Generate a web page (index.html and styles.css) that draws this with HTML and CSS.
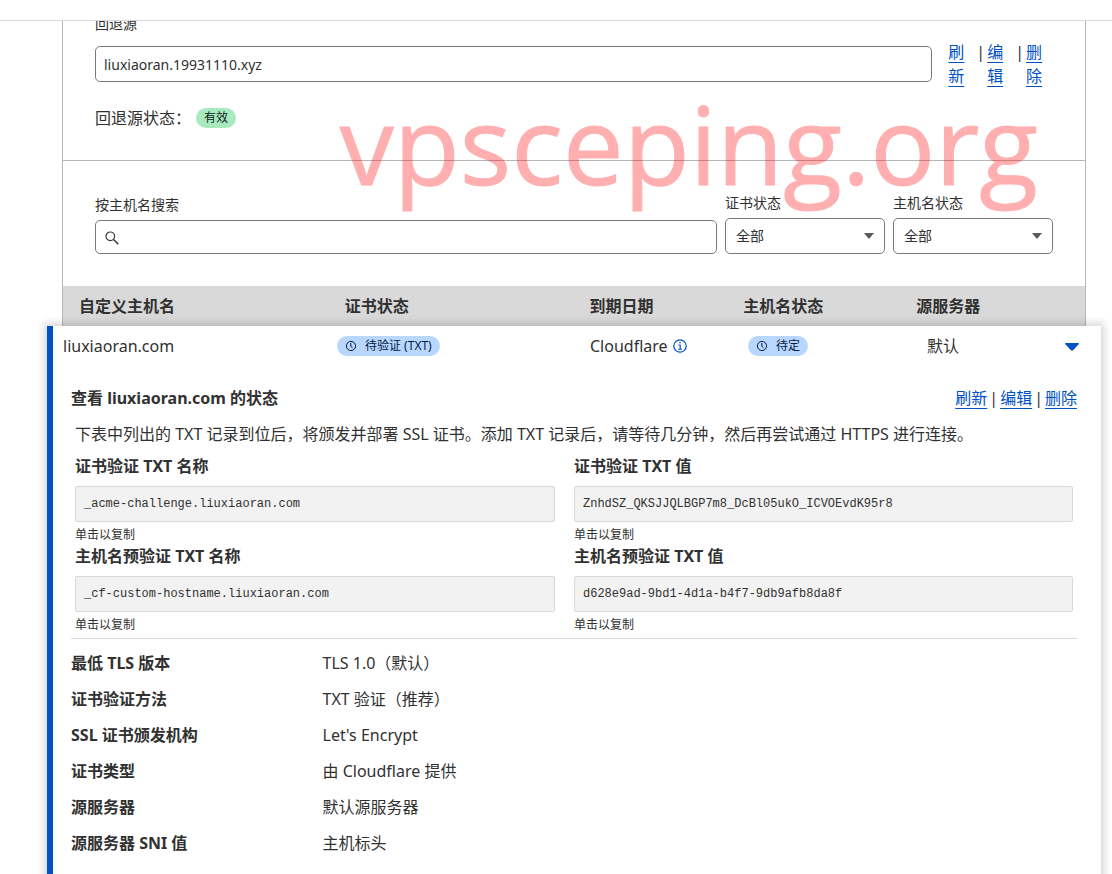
FILE: index.html
```html
<!DOCTYPE html>
<html lang="zh-CN">

<head>
    <meta charset="UTF-8">
    <meta name="viewport" content="width=device-width, initial-scale=1.0">
    <title>自定义主机名</title>
    <link rel="stylesheet" href="styles.css">
</head>

<body>
    <header class="topbar"></header>
    <main class="panel">
        <section class="fallback">
            <label class="label" for="origin">回退源</label>
            <div class="origin-row">
                <input type="text" id="origin" class="origin" value="liuxiaoran.19931110.xyz">
                <div class="links narrow">
                    <a href="#">刷新</a><span>|</span><a href="#">编辑</a><span>|</span><a href="#">删除</a>
                </div>
            </div>
            <div class="status">回退源状态：<span class="badge green">有效</span></div>
            <div class="watermark">vpsceping.org</div>
        </section>

        <form class="filters">
            <div class="field search">
                <label class="label" for="search">按主机名搜索</label>
                <div class="control">
                    <svg class="search-icon" width="14" height="14" viewBox="0 0 14 14" fill="none" stroke="#36393a">
                        <circle cx="5.3" cy="5.3" r="4.3" stroke-width="1.2" />
                        <path d="M8.5 8.5 13.3 13.1" stroke-width="1.5" />
                    </svg>
                    <input type="search" id="search">
                </div>
            </div>
            <div class="field">
                <label class="label" for="certStatus">证书状态</label>
                <div class="control arrow">
                    <select id="certStatus">
                        <option>全部</option>
                    </select>
                </div>
            </div>
            <div class="field">
                <label class="label" for="hostStatus">主机名状态</label>
                <div class="control arrow">
                    <select id="hostStatus">
                        <option>全部</option>
                    </select>
                </div>
            </div>
        </form>

        <table class="hosts">
            <thead>
                <tr>
                    <th>自定义主机名</th>
                    <th>证书状态</th>
                    <th>到期日期</th>
                    <th>主机名状态</th>
                    <th>源服务器</th>
                </tr>
            </thead>
            <tbody>
                <tr class="host">
                    <td>liuxiaoran.com</td>
                    <td>
                        <span class="badge blue">
                            <svg width="12" height="12" viewBox="0 0 12 12" fill="none" stroke="currentColor">
                                <circle cx="6" cy="6" r="4.6" />
                                <path d="M5.8 3v3.3l1.8 1.6" />
                            </svg>
                            待验证 (TXT)
                        </span>
                    </td>
                    <td>
                        Cloudflare
                        <svg class="info" width="14" height="14" viewBox="0 0 14 14" fill="none" stroke="#0051c3">
                            <circle cx="7" cy="7" r="6.2" stroke-width="1.2" />
                            <path d="M5.5 6h1.7v4.2M5.2 10.3h3.8" stroke-width="1.1" />
                            <circle cx="7" cy="3.7" r=".8" fill="#0051c3" stroke="none" />
                        </svg>
                    </td>
                    <td>
                        <span class="badge blue">
                            <svg width="12" height="12" viewBox="0 0 12 12" fill="none" stroke="currentColor">
                                <circle cx="6" cy="6" r="4.6" />
                                <path d="M5.8 3v3.3l1.8 1.6" />
                            </svg>
                            待定
                        </span>
                    </td>
                    <td class="last">
                        默认
                        <button type="button" class="toggle" aria-label="收起">
                            <svg width="14" height="8" viewBox="0 0 14 8" fill="#0051c3">
                                <path d="M.8 0h12.4c.8 0 1 .7.5 1.2L8 7.2c-.6.6-1.4.6-2 0L.3 1.2C-.2.7 0 0 .8 0z" />
                            </svg>
                        </button>
                    </td>
                </tr>
                <tr>
                    <td class="details" colspan="5">
                        <div class="title">
                            <h2>查看 liuxiaoran.com 的状态</h2>
                            <div class="links">
                                <a href="#">刷新</a><span>|</span><a href="#">编辑</a><span>|</span><a href="#">删除</a>
                            </div>
                        </div>
                        <p class="tip">下表中列出的 TXT 记录到位后，将颁发并部署 SSL 证书。添加 TXT 记录后，请等待几分钟，然后再尝试通过 HTTPS 进行连接。</p>
                        <div class="records">
                            <div class="record">
                                <h3>证书验证 TXT 名称</h3>
                                <code>_acme-challenge.liuxiaoran.com</code>
                                <small>单击以复制</small>
                            </div>
                            <div class="record">
                                <h3>证书验证 TXT 值</h3>
                                <code>ZnhdSZ_QKSJJQLBGP7m8_DcBl05ukO_ICVOEvdK95r8</code>
                                <small>单击以复制</small>
                            </div>
                            <div class="record">
                                <h3>主机名预验证 TXT 名称</h3>
                                <code>_cf-custom-hostname.liuxiaoran.com</code>
                                <small>单击以复制</small>
                            </div>
                            <div class="record">
                                <h3>主机名预验证 TXT 值</h3>
                                <code>d628e9ad-9bd1-4d1a-b4f7-9db9afb8da8f</code>
                                <small>单击以复制</small>
                            </div>
                        </div>
                        <table class="props">
                            <tr>
                                <th scope="row">最低 TLS 版本</th>
                                <td>TLS 1.0（默认）</td>
                            </tr>
                            <tr>
                                <th scope="row">证书验证方法</th>
                                <td>TXT 验证（推荐）</td>
                            </tr>
                            <tr>
                                <th scope="row">SSL 证书颁发机构</th>
                                <td>Let's Encrypt</td>
                            </tr>
                            <tr>
                                <th scope="row">证书类型</th>
                                <td>由 Cloudflare 提供</td>
                            </tr>
                            <tr>
                                <th scope="row">源服务器</th>
                                <td>默认源服务器</td>
                            </tr>
                            <tr>
                                <th scope="row">源服务器 SNI 值</th>
                                <td>主机标头</td>
                            </tr>
                        </table>
                    </td>
                </tr>
            </tbody>
        </table>
    </main>
</body>

</html>
```
FILE: styles.css
```css
* {
    margin: 0;
    padding: 0;
    box-sizing: border-box;
}

body {
    height: 100vh;
    overflow: hidden;
    font-family: "Noto Sans", "Noto Sans CJK SC", sans-serif;
    font-size: 16px;
    line-height: 24px;
    color: #313131;
    background-color: #fff;
}

input,
select,
button {
    font: inherit;
    color: inherit;
}

.topbar {
    position: relative;
    z-index: 1;
    height: 21px;
    background-color: #fff;
    border-bottom: 1px solid #d9d9d9;
}

.panel {
    margin: -40px 26px 0 62px;
    border: 1px solid #b6b6b6;
}

.label {
    display: block;
    font-size: 14px;
    line-height: 20px;
}

/* 回退源 */
.fallback {
    position: relative;
    padding: 32px 32px 30px;
    border-bottom: 1px solid #b6b6b6;
}

.origin-row {
    display: flex;
    align-items: center;
    gap: 16px;
    margin-top: 6px;
}

.origin {
    flex: 1;
    min-width: 0;
    height: 36px;
    padding: 0 8px;
    font-size: 14px;
    border: 1px solid #797979;
    border-radius: 5px;
}

.links {
    display: flex;
}

.links a {
    color: #0051c3;
    text-decoration: underline 1px;
    text-underline-offset: 4px;
}

.links span {
    margin: 0 2px;
}

.narrow {
    padding-right: 11px;
}

.narrow a {
    width: 16px;
}

.narrow span {
    margin-left: 12px;
}

.status {
    display: flex;
    align-items: center;
    margin-top: 18px;
}

.badge {
    display: inline-flex;
    align-items: center;
    gap: 8px;
    height: 20px;
    padding: 0 8px;
    font-size: 12px;
    line-height: 20px;
    border-radius: 10px;
}

.green {
    margin-left: 5px;
    color: #0f2417;
    background-color: #a8e9c0;
}

.blue {
    color: #001c43;
    background-color: #b9d6ff;
}

.watermark {
    position: absolute;
    top: 122px;
    right: 47px;
    font-family: "Open Sans", sans-serif;
    font-size: 108px;
    line-height: 80px;
    color: #f00;
    -webkit-text-stroke: 1px #f00;
    opacity: .31;
    pointer-events: none;
}

/* 筛选 */
.filters {
    display: flex;
    align-items: flex-end;
    gap: 8px;
    padding: 32px;
}

.field {
    width: 160px;
}

.search {
    flex: 1;
}

.control {
    position: relative;
    margin-top: 5px;
}

.control input,
.control select {
    display: block;
    width: 100%;
    height: 36px;
    padding: 0 10px;
    font-size: 14px;
    background-color: #fff;
    border: 1px solid #797979;
    border-radius: 5px;
    appearance: none;
}

.control input {
    height: 34px;
    padding-left: 32px;
}

.search-icon {
    position: absolute;
    top: 11px;
    left: 10px;
}

.arrow::after {
    content: "";
    position: absolute;
    top: 15px;
    right: 11px;
    border: 5px solid transparent;
    border-top: 6px solid #595959;
    border-bottom: none;
    pointer-events: none;
}

/* 主机名列表 */
.hosts,
.hosts > thead,
.hosts > tbody {
    display: block;
}

.hosts > thead > tr {
    display: grid;
    grid-template-columns: 266fr 245fr 154fr 173fr 153fr;
    padding: 8px 16px;
    text-align: left;
    background-color: #d9d9d9;
}

.hosts > tbody {
    position: relative;
    margin: 0 -16px;
    padding-bottom: 32px;
    background-color: #fff;
    border-left: 6px solid #0051c3;
    box-shadow: 0 0 8px 3px rgba(0, 0, 0, .16);
}

.host {
    display: grid;
    grid-template-columns: 274fr 253fr 158fr 179fr 152fr;
    align-items: center;
    height: 40px;
    padding: 0 22px 0 10px;
}

.host td {
    display: flex;
    align-items: center;
}

.info {
    margin-left: 5px;
}

.host .last {
    justify-content: space-between;
}

.toggle {
    display: flex;
    padding-top: 2px;
    border: none;
    background: none;
}

.hosts > tbody > tr + tr,
.details {
    display: block;
}

.details {
    padding: 20px 24px 0 18px;
}

.title {
    display: flex;
    justify-content: space-between;
}

h2,
h3 {
    font-size: 16px;
    font-weight: 700;
}

.tip {
    margin: 12px 4px 8px;
}

.records {
    display: grid;
    grid-template-columns: 1fr 1fr;
    padding: 0 4px 4px;
    border-bottom: 1px solid #d9d9d9;
}

.record:nth-child(odd) {
    padding-right: 19px;
}

.record code {
    display: block;
    height: 36px;
    margin: 8px 0 4px;
    padding: 0 8px;
    font-family: "Courier New", "Liberation Mono", monospace;
    font-size: 12px;
    line-height: 34px;
    background-color: #f2f2f2;
    border: 1px solid #d9d9d9;
    border-radius: 2px;
}

.record small {
    display: block;
    font-size: 12px;
    line-height: 18px;
}

.props {
    width: 100%;
    margin-top: 6px;
    border-collapse: collapse;
}

.props th,
.props td {
    padding: 6px 0;
    text-align: left;
}

.props th {
    width: 25%;
}
```
